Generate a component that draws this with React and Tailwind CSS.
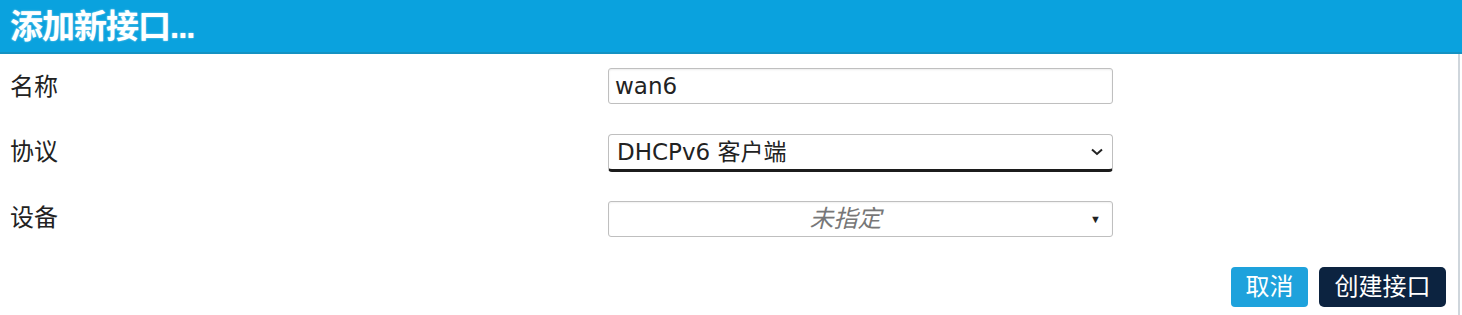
import { useState } from 'react'

const FONT = { fontFamily: '"Liberation Sans", "Noto Sans CJK SC", sans-serif' }
const FIELD_FONT = { fontFamily: '"DejaVu Sans", "Noto Sans CJK SC", sans-serif' }

export default function App() {
  const [name, setName] = useState('wan6')

  return (
    <div className="h-[315px] w-[1462px] overflow-hidden bg-white text-[#222]" style={FONT}>
      {/* Header */}
      <div className="flex h-[54px] items-center border-b-2 border-[#1492c2] bg-[#0aa2de] pl-[10px]">
        <h3
          className="text-[33px] font-bold leading-none tracking-[-1px] text-white"
          style={{ textShadow: '0 0 2px rgba(255,255,255,0.6)' }}
        >
          添加新接口...
        </h3>
      </div>

      <div className="mr-[2px] h-[261px] border-r-2 border-[#cfd6dc] pr-[12px]">
        {/* Rows */}
        <div className="flex flex-col pt-[14px]">
          <div className="flex h-[66px] items-start">
            <label className="w-[608px] pl-[10px] pt-[4px] text-[24px] leading-[30px]">名称</label>
            <input
              value={name}
              onChange={(e) => setName(e.target.value)}
              className="h-[36px] w-[505px] rounded-[3px] border border-[#bfbfbf] px-[6px] text-[23px] text-[#222] shadow-[inset_0_1px_2px_rgba(0,0,0,0.08)] outline-none"
              style={FIELD_FONT}
            />
          </div>

          <div className="flex h-[67px] items-start">
            <label className="w-[608px] pl-[10px] pt-[3px] text-[24px] leading-[30px]">协议</label>
            <div
              className="flex h-[38px] w-[505px] items-center justify-between rounded-[4px] border border-b-[3px] border-[#bfbfbf] border-b-[#1c1c1c] pl-[8px] pr-[8px] text-[23px]"
              style={FIELD_FONT}
            >
              <span>DHCPv6 客户端</span>
              <svg width="14" height="10" viewBox="0 0 14 10" fill="none">
                <path d="M2 2.5 L7 7 L12 2.5" stroke="#222" strokeWidth="2" />
              </svg>
            </div>
          </div>

          <div className="flex h-[66px] items-start">
            <label className="w-[608px] pl-[10px] pt-[2px] text-[24px] leading-[30px]">设备</label>
            <div className="flex h-[36px] w-[505px] items-center rounded-[3px] border border-[#bfbfbf] pr-[11px] shadow-[inset_0_1px_2px_rgba(0,0,0,0.06)]">
              <span className="flex-1 pr-[8px] text-center text-[24px] italic text-[#777]" style={FIELD_FONT}>
                未指定
              </span>
              <span className="text-[11px] text-[#222]">▼</span>
            </div>
          </div>
        </div>

        {/* Actions */}
        <div className="flex justify-end gap-[11px]">
          <button className="h-[40px] w-[77px] rounded-[4px] bg-[#1ea2dc] text-[24px] text-white">取消</button>
          <button className="h-[40px] w-[127px] rounded-[5px] bg-[#0c2340] text-[24px] text-white">创建接口</button>
        </div>
      </div>
    </div>
  )
}
